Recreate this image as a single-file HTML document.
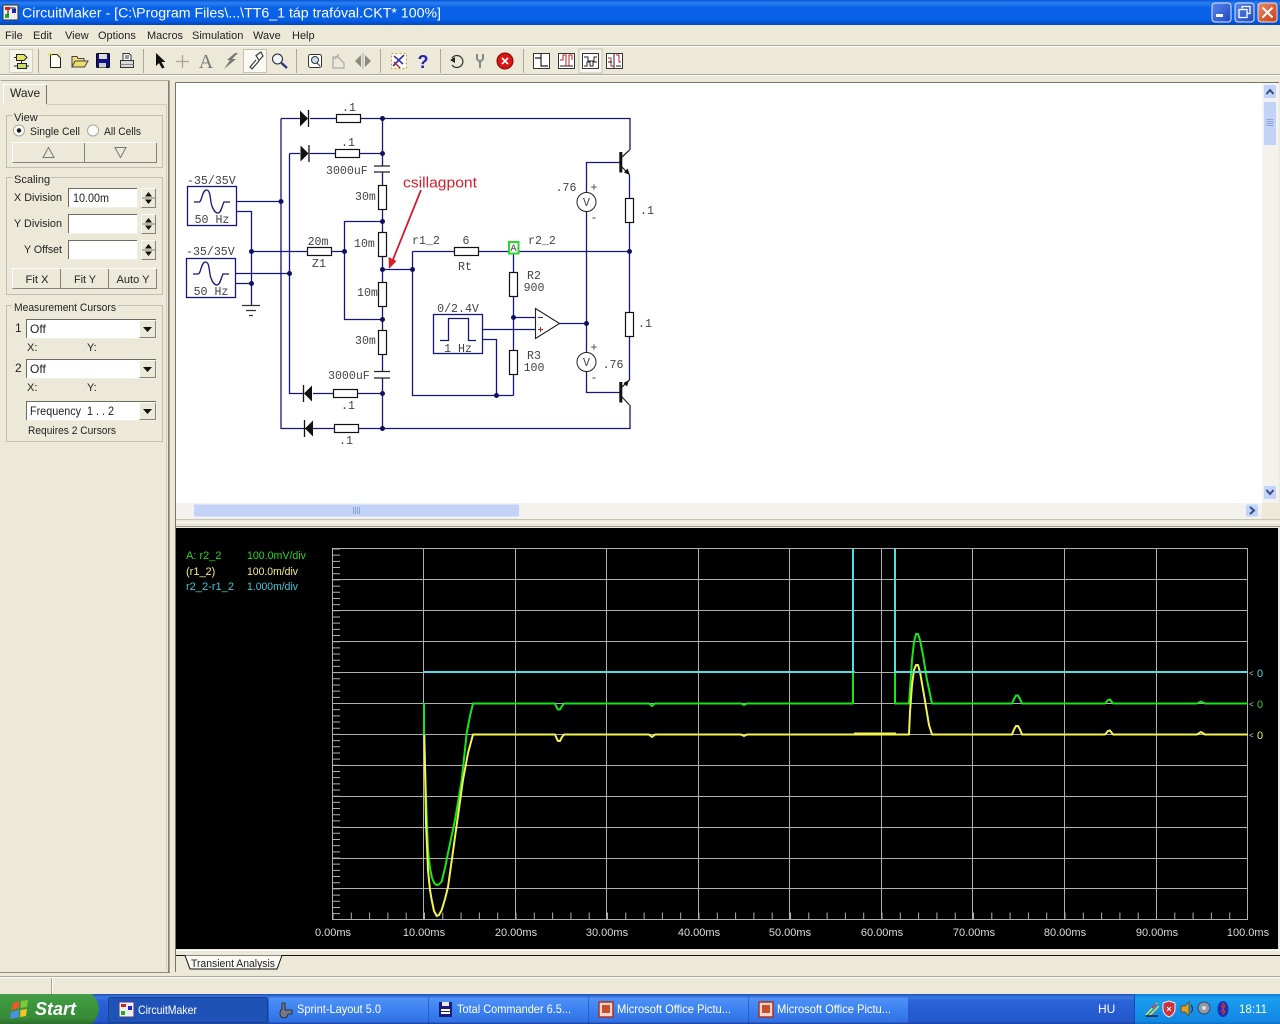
<!DOCTYPE html>
<html><head><meta charset="utf-8"><title>CircuitMaker</title>
<style>
html,body{margin:0;padding:0;background:#ece9d8;overflow:hidden}
svg{display:block}
text{font-family:"Liberation Sans",sans-serif;font-size:11px;fill:#222}
.m{font-family:"Liberation Mono",monospace;font-size:11.6px;fill:#444}
.mc{font-family:"Liberation Mono",monospace;font-size:11.6px;fill:#444;text-anchor:middle}
.c{text-anchor:middle}
.w{fill:none;stroke:#16167c;stroke-width:1.3}
.r{fill:#fff;stroke:#111;stroke-width:1.2}
.g{fill:none;stroke:#c2bfb0;stroke-width:1}
.b{fill:#ece9d8;stroke:none}
.hl{fill:none;stroke:#fff}
.sh{fill:none;stroke:#85837a}
.i{fill:#fff;stroke:#f2f0e6;stroke-width:1}
.d{fill:#101060}
.tb{fill:#fff;font-size:12px}
.ax{fill:#ddd;font-size:11px;text-anchor:middle}
.gr{stroke:#b0b0b0;stroke-width:1;fill:none}
.ic{fill:none;stroke:#333;stroke-width:1}
.sp{stroke:#aca899;stroke-width:1}
.tr{fill:none;stroke-width:2;stroke-linejoin:round}
</style></head><body>
<svg xmlns="http://www.w3.org/2000/svg" width="1280" height="1024" viewBox="0 0 1280 1024">
<defs>
<linearGradient id="tt" x1="0" y1="0" x2="0" y2="1"><stop offset="0" stop-color="#0a55dc"/><stop offset=".12" stop-color="#2a80f0"/><stop offset=".3" stop-color="#0a62e8"/><stop offset=".8" stop-color="#0660e6"/><stop offset="1" stop-color="#0344c0"/></linearGradient>
<linearGradient id="tk" x1="0" y1="0" x2="0" y2="1"><stop offset="0" stop-color="#1f4fb8"/><stop offset=".1" stop-color="#3a78e0"/><stop offset=".25" stop-color="#2a62d8"/><stop offset=".9" stop-color="#2358cc"/><stop offset="1" stop-color="#1a45a8"/></linearGradient>
<linearGradient id="st" x1="0" y1="0" x2="0" y2="1"><stop offset="0" stop-color="#4d9a4d"/><stop offset=".2" stop-color="#3f9a3f"/><stop offset=".8" stop-color="#378a37"/><stop offset="1" stop-color="#2a6e2a"/></linearGradient>
<linearGradient id="tr" x1="0" y1="0" x2="0" y2="1"><stop offset="0" stop-color="#0f7fd8"/><stop offset=".15" stop-color="#1a9ef0"/><stop offset=".9" stop-color="#1288e4"/><stop offset="1" stop-color="#0d6fc4"/></linearGradient>
<linearGradient id="tb1" x1="0" y1="0" x2="0" y2="1"><stop offset="0" stop-color="#4f92f6"/><stop offset=".5" stop-color="#3c81f0"/><stop offset="1" stop-color="#3170e0"/></linearGradient>
<linearGradient id="cl" x1="0" y1="0" x2="1" y2="1"><stop offset="0" stop-color="#e88a6a"/><stop offset="1" stop-color="#c63c14"/></linearGradient>
<linearGradient id="bl" x1="0" y1="0" x2="1" y2="1"><stop offset="0" stop-color="#5a86ee"/><stop offset="1" stop-color="#1e48c0"/></linearGradient>
</defs>

<rect width="1280" height="1024" fill="#ece9d8"/>

<!-- title bar -->
<rect width="1280" height="25" fill="url(#tt)"/>
<rect x="3" y="5" width="15" height="15" fill="#eee" stroke="#333"/>
<rect x="5" y="7" width="5" height="3" fill="#c22"/><rect x="12" y="9" width="4" height="4" fill="#22c"/><rect x="5" y="14" width="4" height="4" fill="#2a2"/><path d="M8 10V15M10 8H15V10" stroke="#111" fill="none"/>
<text x="22" y="17.5" style="font-size:13.500px;fill:#fff" textLength="419" lengthAdjust="spacingAndGlyphs">CircuitMaker - [C:\Program Files\...\TT6_1 táp trafóval.CKT* 100%]</text>
<rect x="1212" y="3" width="19" height="19" rx="3" fill="url(#bl)" stroke="#dfe8fa"/>
<rect x="1216" y="14" width="7" height="3" fill="#fff"/>
<rect x="1235" y="3" width="19" height="19" rx="3" fill="url(#bl)" stroke="#dfe8fa"/>
<path d="M1242 8.500V6.500H1250V13.500H1247M1239 9.500H1247V17.500H1239Z" fill="none" stroke="#fff" stroke-width="1.300"/>
<rect x="1258" y="3" width="19" height="19" rx="3" fill="url(#cl)" stroke="#f0e0d8"/>
<path d="M1262.500 7.500L1272.500 17.500M1272.500 7.500L1262.500 17.500" stroke="#fff" stroke-width="2"/>

<!-- menu -->
<g style="font-size:11px">
<text x="5" y="39">File</text><text x="33" y="39">Edit</text><text x="65" y="39">View</text><text x="98" y="39">Options</text><text x="147" y="39">Macros</text><text x="192" y="39">Simulation</text><text x="253" y="39">Wave</text><text x="292" y="39">Help</text>
</g>
<path d="M0 45.500H1280" stroke="#aca899"/><path d="M0 46.500H1280" stroke="#fff"/>
<path d="M0 74.500H1280" stroke="#aca899"/><path d="M0 75.500H1280" stroke="#fbfaf4"/>

<!-- toolbar -->
<path class="sp" d="M38.500 49V73M143.500 49V73M296.500 49V73M380.500 49V73M440.500 49V73M523.500 49V73"/>
<rect x="9.500" y="49.500" width="23" height="23" fill="#f4f3ea" stroke="#d2cfc0"/>
<path d="M16.500 54.500H24L27 57.500L24 60.500H16.500Z" fill="#e8e468" stroke="#222"/>
<rect x="17.500" y="63.500" width="9" height="5" fill="#c8d870" stroke="#222"/>
<path d="M14 57.500H16.500M14 66H17.500M26.500 66H29M21.500 60.500V63.500" stroke="#222"/>
<path d="M50.500 54.500H57L60.500 58V67.500H50.500Z" fill="#fffff4" stroke="#222"/>
<path d="M48 56L50 53L52 56M60 52V56" stroke="#e8e030" fill="none"/>
<path d="M72 67V56.500H77L78 58.500H84V61" fill="#f0e080" stroke="#444"/><path d="M72 67L75 61H88L84.500 67Z" fill="#ece070" stroke="#444"/>
<rect x="96.500" y="53.500" width="13" height="14" rx="1" fill="#10108c" stroke="#000"/><rect x="99" y="54" width="8" height="5" fill="#ddd"/><rect x="99" y="63" width="7" height="4.500" fill="#ccc"/>
<path d="M123 60V53.500H129L131 55.500V60" fill="#f8f8f8" stroke="#333"/><path d="M125 56H129M125 58H129" stroke="#333"/><path d="M120.500 60.500H133.500V67.500H120.500Z" fill="#d8d8d8" stroke="#333"/><path d="M120.500 64.500H133.500" stroke="#888"/>
<path d="M156 53L156 66L159 63L162 68.500L164.500 67.500L161.500 62L165.500 62Z" fill="#111"/>
<path d="M182.500 55V68M176 61.500H189" stroke="#a8a698" stroke-width="1.300"/>
<text x="206" y="68" class="c" style="font-family:'Liberation Serif',serif;font-size:20px;fill:#777">A</text>
<path d="M235 53L227 60H230L224 69L236 59H232L238 53Z" fill="#777"/>
<rect x="243.500" y="49.500" width="23" height="23" fill="#fafaf4" stroke="#c5c2b2"/>
<path d="M256 55.500L261 52L263 56L259 60.500ZM256 60L250 67L252 69L259 61" fill="none" stroke="#333" stroke-width="1.100"/>
<circle cx="277.500" cy="59" r="5" fill="#f0f6fc" stroke="#223"/><path d="M281.500 63L287 68" stroke="#2a2a80" stroke-width="2.200"/>
<rect x="308.500" y="54.500" width="13" height="13" rx="2" fill="#fff" stroke="#333"/><circle cx="315" cy="60" r="3.500" fill="#cde" stroke="#333"/><path d="M317 63L320 66" stroke="#333"/>
<path d="M333 68V57H338L344 63V68ZM335 59L339 54" fill="none" stroke="#aaa" stroke-width="1.300"/>
<path d="M361 55L355 61L361 67ZM365 55L371 61L365 67Z" fill="#8a8a80"/><path d="M363 53V69" stroke="#aaa"/>
<rect x="391.500" y="53.500" width="15" height="15" fill="#fff" stroke="#c8a020" stroke-dasharray="2 2"/><path d="M393 66L404 55M394 56L403 64" stroke="#3333aa" stroke-width="1.600"/><path d="M394 62L400 68" stroke="#c02020" stroke-width="1.400"/>
<text x="423" y="68" class="c" style="font-size:18px;font-weight:bold;fill:#2020c0">?</text>
<path d="M452 58A6 6 0 1 1 452 65" fill="none" stroke="#333" stroke-width="1.200"/><path d="M450 60L455 57L455 63Z" fill="#222"/>
<path d="M477 54V59L480 62V68M483 54V59L480 62" fill="none" stroke="#888" stroke-width="2"/>
<circle cx="505" cy="61" r="8" fill="#d81818" stroke="#800"/><path d="M502 58L508 64M508 58L502 64" stroke="#fff" stroke-width="1.600"/>
<rect x="533.500" y="53.500" width="16" height="15" fill="#fff" stroke="#333"/><path d="M535 58H541V54M541 58V66H548" fill="none" stroke="#222" stroke-width="1.200"/>
<rect x="558.500" y="53.500" width="16" height="15" fill="#fff" stroke="#333"/><path d="M560 60H563V55H566V66H569V55H572V60" fill="none" stroke="#c02020"/><path d="M560 66H573" stroke="#222"/>
<rect x="579" y="49" width="23" height="24" fill="#f7f6f0" stroke="#c5c2b2"/><rect x="582.500" y="53.500" width="16" height="15" fill="#fff" stroke="#333"/><path d="M584 57H588V61H594V57H597M584 66H587V62H590V66H593V62H597" fill="none" stroke="#222"/>
<rect x="606.500" y="53.500" width="16" height="15" fill="#fff" stroke="#333"/><path d="M608 58H611V66H614M616 55H619V62H621" fill="none" stroke="#c02020"/><path d="M614 54V68" stroke="#223"/><path d="M608 62H612M616 66H621" stroke="#222"/>

<!-- left panel -->
<path d="M0.500 80.500H169.500M169.500 80.500V972" fill="none" stroke="#aca899"/>
<path d="M0 972.500H170" stroke="#8d8a7c"/>
<path d="M168.500 81V972" stroke="#808070"/>
<path d="M47 104.500H166M166.500 104V970" fill="none" stroke="#cfccbc"/>
<path d="M3.500 104.500V84.500H46.500" fill="none" stroke="#fff"/><path d="M46.500 85V104" stroke="#77756a"/>
<text x="10" y="97" style="font-size:12px">Wave</text>

<rect class="g" x="6.500" y="115.500" width="156" height="52"/>
<rect x="12" y="112" width="27" height="10" fill="#ece9d8"/><text x="14" y="121">View</text>
<circle cx="19" cy="130.500" r="5.500" fill="#fff" stroke="#a8a698"/><circle cx="19" cy="130.500" r="2.200" fill="#111"/>
<text x="30" y="135" textLength="50" lengthAdjust="spacingAndGlyphs">Single Cell</text>
<circle cx="93" cy="130.500" r="5.500" fill="#fff" stroke="#a8a698"/>
<text x="104" y="135" textLength="37" lengthAdjust="spacingAndGlyphs">All Cells</text>
<path class="hl" d="M12.500 162V142.500H84M84.500 162V142.500H156"/><path class="sh" d="M12.500 162.500H84.500V143M84.500 162.500H156.500V143"/>
<path d="M48.500 147.500L54 157.500H43Z" fill="none" stroke="#777"/><path d="M115 147.500H126L120.500 157.500Z" fill="none" stroke="#777"/>

<rect class="g" x="6.500" y="177.500" width="156" height="117"/>
<rect x="12" y="174" width="39" height="10" fill="#ece9d8"/><text x="14" y="183">Scaling</text>
<text x="14" y="201" textLength="48" lengthAdjust="spacingAndGlyphs">X Division</text>
<rect class="i" x="68.500" y="188.500" width="69" height="19"/><path d="M68.500 207V188.500H137" fill="none" stroke="#6e6c60"/><text x="73" y="202" style="font-size:12px" textLength="36" lengthAdjust="spacingAndGlyphs">10.00m</text>
<text x="14" y="227" textLength="48" lengthAdjust="spacingAndGlyphs">Y Division</text>
<rect class="i" x="68.500" y="214.500" width="69" height="19"/><path d="M68.500 233V214.500H137" fill="none" stroke="#6e6c60"/>
<text x="24" y="253" textLength="38" lengthAdjust="spacingAndGlyphs">Y Offset</text>
<rect class="i" x="68.500" y="240.500" width="69" height="19"/><path d="M68.500 259V240.500H137" fill="none" stroke="#6e6c60"/>
<path class="hl" d="M141.500 207V188.500H155M141.500 233V214.500H155M141.500 259V240.500H155"/>
<path class="sh" d="M141.500 207.500H155.500V189M141.500 233.500H155.500V215M141.500 259.500H155.500V241M142 198H155M142 224H155M142 250H155"/>
<path d="M145 196.500L148.500 192L152 196.500ZM145 199.500H152L148.500 204ZM145 222.500L148.500 218L152 222.500ZM145 225.500H152L148.500 230ZM145 248.500L148.500 244L152 248.500ZM145 251.500H152L148.500 256Z" fill="#111"/>
<path class="hl" d="M12.500 288V268.500H60M60.500 288V268.500H108M108.500 288V268.500H156"/><path class="sh" d="M12.500 288.500H156.500V269M60.500 288.500V269M108.500 288.500V269"/>
<text x="37" y="283" class="c" textLength="23" lengthAdjust="spacingAndGlyphs">Fit X</text><text x="85" y="283" class="c" textLength="22" lengthAdjust="spacingAndGlyphs">Fit Y</text><text x="133" y="283" class="c" textLength="33" lengthAdjust="spacingAndGlyphs">Auto Y</text>

<rect class="g" x="6.500" y="305.500" width="156" height="136"/>
<rect x="12" y="302" width="106" height="10" fill="#ece9d8"/><text x="14" y="311" textLength="102" lengthAdjust="spacingAndGlyphs">Measurement Cursors</text>
<text x="15" y="332" style="font-size:12px">1</text>
<rect class="i" x="26.500" y="319.500" width="130" height="19"/><path d="M26.500 338V319.500H156" fill="none" stroke="#6e6c60"/><text x="30" y="333" style="font-size:12px">Off</text>
<rect class="b" x="139" y="320" width="17" height="18"/><path class="hl" d="M139.500 337V320.500H155"/><path class="sh" d="M139.500 337.500H155.500V321"/><path d="M143 327H152L147.500 332Z" fill="#111"/>
<text x="27" y="351">X:</text><text x="87" y="351">Y:</text>
<text x="15" y="372" style="font-size:12px">2</text>
<rect class="i" x="26.500" y="359.500" width="130" height="19"/><path d="M26.500 378V359.500H156" fill="none" stroke="#6e6c60"/><text x="30" y="373" style="font-size:12px">Off</text>
<rect class="b" x="139" y="360" width="17" height="18"/><path class="hl" d="M139.500 377V360.500H155"/><path class="sh" d="M139.500 377.500H155.500V361"/><path d="M143 367H152L147.500 372Z" fill="#111"/>
<text x="27" y="391">X:</text><text x="87" y="391">Y:</text>
<rect class="i" x="26.500" y="401.500" width="130" height="19"/><path d="M26.500 420V401.500H156" fill="none" stroke="#6e6c60"/><text x="30" y="415" style="font-size:12px;white-space:pre" textLength="84" lengthAdjust="spacingAndGlyphs">Frequency  1 . . 2</text>
<rect class="b" x="139" y="402" width="17" height="18"/><path class="hl" d="M139.500 419V402.500H155"/><path class="sh" d="M139.500 419.500H155.500V403"/><path d="M143 409H152L147.500 414Z" fill="#111"/>
<text x="28" y="434" textLength="88" lengthAdjust="spacingAndGlyphs">Requires 2 Cursors</text>

<!-- circuit area -->
<rect x="176" y="83" width="1086" height="420" fill="#fff"/>
<path d="M175.500 82.500H1279M175.500 82.500V972" fill="none" stroke="#77756a"/>
<!-- wires -->
<path class="w" d="M281 118.500H300M310 118.500H337M361 118.500H630V150M281 118.500V428.500H630V405M289.500 153.500H300M310 153.500H335M360 153.500H382M289.500 153.500V393.500H303M313 393.500H333M358 393.500H382M313 428.500H334M359 428.500H382"/>
<path class="w" d="M382.500 118.500V165.500M382.500 172.500V185M382.500 209V232M382.500 257V282M382.500 306V330M382.500 355V371M382.500 378V428.500"/>
<path class="w" d="M382.500 221.500H344.500V319.500H382.500M251.500 251.500H307M332 251.500H344.500"/>
<path class="w" d="M237 201.500H281M237 211.500H251.500V305M236 273.500H289.500M236 283.500H251.500"/>
<path class="w" d="M382.500 269.500H412.500M412.500 251.500V395.500H513.500M412.500 251.500H454M479 251.500H629.500M513.500 252V272M513.500 297V350M513.500 375V395.500"/>
<path class="w" d="M513.500 317.500H535M483 329.500H535M559 323.500H586.500M483 339.500H496.500V395.500"/>
<path class="w" d="M606 162.500H586.500V192.500M586.500 211.500V352.500M586.500 371.500V392.500H606"/>
<path class="w" d="M629.500 175V198M629.500 222V312M629.500 337V380"/>
<path d="M606 162.500H620M606 392.500H620" stroke="#16167c" stroke-width="1.300"/>
<!-- ground -->
<path d="M242 305.500H260M246 310.500H256M249 315.500H253" stroke="#333" stroke-width="1.200"/>
<!-- junctions -->
<g class="d">
<circle cx="382.500" cy="118.500" r="2.500"/><circle cx="382.500" cy="153.500" r="2.500"/><circle cx="382.500" cy="221.500" r="2.500"/><circle cx="382.500" cy="269.500" r="2.500"/><circle cx="382.500" cy="319.500" r="2.500"/><circle cx="382.500" cy="393.500" r="2.500"/><circle cx="382.500" cy="428.500" r="2.500"/>
<circle cx="281" cy="201.500" r="2.500"/><circle cx="289.500" cy="273.500" r="2.500"/><circle cx="251.500" cy="251.500" r="2.500"/><circle cx="251.500" cy="283.500" r="2.500"/><circle cx="344.500" cy="251.500" r="2.500"/>
<circle cx="412.500" cy="269.500" r="2.500"/><circle cx="496.500" cy="395.500" r="2.500"/><circle cx="513.500" cy="317.500" r="2.500"/><circle cx="586.500" cy="323.500" r="2.500"/><circle cx="629.500" cy="251.500" r="2.500"/>
</g>
<!-- diodes -->
<path d="M300 110.500V126.500L308 118.500ZM300.500 145.500V161.500L308.500 153.500ZM312 385.500V401.500L304 393.500ZM313 420.500V436.500L305 428.500Z" fill="#111"/>
<path d="M308.500 110V127M309 145V162M303.500 385V402M304.500 420V437" stroke="#111" stroke-width="1.300"/>
<!-- resistors -->
<rect class="r" x="336.500" y="114.500" width="24" height="8"/><rect class="r" x="335.500" y="149.500" width="24" height="8"/>
<rect class="r" x="333.500" y="389.500" width="24" height="8"/><rect class="r" x="334.500" y="424.500" width="24" height="8"/>
<rect class="r" x="378.500" y="185.500" width="8" height="24"/><rect class="r" x="378.500" y="232.500" width="8" height="24"/>
<rect class="r" x="378.500" y="282.500" width="8" height="24"/><rect class="r" x="378.500" y="330.500" width="8" height="24"/>
<rect class="r" x="307.500" y="247.500" width="24" height="8"/><rect class="r" x="454.500" y="247.500" width="24" height="8"/>
<rect class="r" x="509.500" y="272.500" width="8" height="24"/><rect class="r" x="509.500" y="350.500" width="8" height="24"/>
<rect class="r" x="625.500" y="198.500" width="8" height="24"/><rect class="r" x="625.500" y="312.500" width="8" height="24"/>
<!-- caps -->
<path d="M374 166H390M374 172H390M374 371.500H390M374 378H390" stroke="#222" stroke-width="1.300"/>
<!-- sources -->
<rect x="187.500" y="186.500" width="49" height="39" fill="#fff" stroke="#16167c" stroke-width="1.300"/>
<rect x="186.500" y="258.500" width="49" height="39" fill="#fff" stroke="#16167c" stroke-width="1.300"/>
<path class="w" d="M194 202H199C202 202 202 190 206.500 190C211 190 210 202 212 206C214 212 216 213 218 213C221 213 222 206 224 202H230"/>
<path class="w" d="M193 274H198C201 274 201 262 205.500 262C210 262 209 274 211 278C213 284 215 285 217 285C220 285 221 278 223 274H229"/>
<rect x="433.500" y="314.500" width="49" height="39" fill="#fff" stroke="#16167c" stroke-width="1.300"/>
<path class="w" d="M440 340.500H448.500V318.500H468.500V340.500H476"/>
<!-- opamp -->
<path d="M535.500 308.500V338.500L559.500 323.500Z" fill="#fff" stroke="#222" stroke-width="1.100"/>
<path d="M538 317.500H543" stroke="#333"/><path d="M538 329.500H543M540.500 327V332" stroke="#c02020"/>
<!-- voltmeters -->
<circle cx="586.500" cy="202" r="9.500" fill="#fff" stroke="#222"/><circle cx="586.500" cy="362" r="9.500" fill="#fff" stroke="#222"/>
<text x="586.500" y="206" class="mc">V</text><text x="586.500" y="366" class="mc">V</text>
<!-- transistors -->
<path d="M620.800 152V172.500M620.800 382V402.500" stroke="#111" stroke-width="3"/>
<path d="M622 157L629.500 150M622 167L629.500 175M622 387L629.500 380M622 397L629.500 405" stroke="#222" stroke-width="1.200"/>
<path d="M630 175L624 172.500L627.500 168.500ZM623.500 383L629 380L627 386.500Z" fill="#111"/>
<!-- probe -->
<rect x="509" y="242" width="9.500" height="11.500" fill="#fff" stroke="#22dd22" stroke-width="2"/>
<text x="513.500" y="251" class="mc" style="font-size:10px">A</text>
<!-- labels -->
<text x="349" y="111" class="mc">.1</text><text x="348" y="146" class="mc">.1</text>
<text x="326" y="174" class="m">3000uF</text><text x="355" y="200" class="m">30m</text><text x="354" y="247" class="m">10m</text><text x="357" y="296" class="m">10m</text><text x="355" y="344" class="m">30m</text><text x="328" y="379" class="m">3000uF</text>
<text x="348" y="409" class="mc">.1</text><text x="346" y="444" class="mc">.1</text>
<text x="187" y="184" class="m">-35/35V</text><text x="186" y="255" class="m">-35/35V</text>
<text x="212" y="223" class="mc">50 Hz</text><text x="211" y="295" class="mc">50 Hz</text>
<text x="318" y="245" class="mc">20m</text><text x="319" y="267" class="mc">Z1</text>
<text x="412" y="244" class="m">r1_2</text><text x="466" y="244" class="mc">6</text><text x="465" y="270" class="mc">Rt</text><text x="528" y="244" class="m">r2_2</text>
<text x="534" y="279" class="mc">R2</text><text x="534" y="291" class="mc">900</text><text x="534" y="359" class="mc">R3</text><text x="534" y="371" class="mc">100</text>
<text x="458" y="312" class="mc">0/2.4V</text><text x="458" y="352" class="mc">1 Hz</text>
<text x="566" y="191" class="mc">.76</text><text x="613" y="368" class="mc">.76</text>
<text x="594" y="191" class="mc">+</text><text x="594" y="221" class="mc">-</text><text x="594" y="351" class="mc">+</text><text x="594" y="381" class="mc">-</text>
<text x="647" y="214" class="mc">.1</text><text x="645" y="327" class="mc">.1</text>
<!-- annotation -->
<text x="403" y="187.500" style="font-size:14.500px;fill:#d02030" textLength="74" lengthAdjust="spacingAndGlyphs">csillagpont</text>
<path d="M421 190L392 262" stroke="#d02030" stroke-width="1.800"/>
<path d="M389 269L388.500 257L396.500 261Z" fill="#d82020"/>

<!-- vertical scrollbar -->
<rect x="1262" y="83" width="17" height="420" fill="#f3f2ec"/>
<rect x="1263.500" y="84.500" width="13" height="14" rx="1.500" fill="#c3d3f8" stroke="#eef2fc"/>
<path d="M1266.500 94L1270 90L1273.500 94" fill="none" stroke="#3a4d80" stroke-width="2"/>
<rect x="1263.500" y="101.500" width="13" height="44" rx="1.500" fill="#c3d3f8" stroke="#eef2fc"/>
<path d="M1266.500 119.500H1273.500M1266.500 121.500H1273.500M1266.500 123.500H1273.500M1266.500 125.500H1273.500" stroke="#8ea4d8"/>
<rect x="1263.500" y="485.500" width="13" height="14" rx="1.500" fill="#c3d3f8" stroke="#eef2fc"/>
<path d="M1266.500 490L1270 494L1273.500 490" fill="none" stroke="#3a4d80" stroke-width="2"/>
<!-- horizontal scrollbar -->
<rect x="176" y="503" width="1086" height="16" fill="#f3f2ec"/>
<rect x="193.500" y="504" width="326" height="13" rx="1.500" fill="#c3d3f8" stroke="#eef2fc"/>
<path d="M353.500 507V514M355.500 507V514M357.500 507V514M359.500 507V514" stroke="#8ea4d8"/>
<rect x="1245.500" y="504" width="13" height="13" rx="1.500" fill="#c3d3f8" stroke="#eef2fc"/>
<path d="M1250 507L1254 510.500L1250 514" fill="none" stroke="#3a4d80" stroke-width="2"/>
<path d="M176 519.500H1280" stroke="#c8c5b5"/><path d="M176 522.500H1280" stroke="#fbfaf4"/><path d="M176 526.500H1280" stroke="#9c9a8c"/>

<!-- plot -->
<rect x="176" y="528" width="1102" height="421" fill="#000"/>
<g class="gr">
<path d="M332.500 548.500H1247.500M332.500 579.500H1247.500M332.500 610.500H1247.500M332.500 641.500H1247.500M332.500 672.500H1247.500M332.500 703.500H1247.500M332.500 734.500H1247.500M332.500 765.500H1247.500M332.500 796.500H1247.500M332.500 827.500H1247.500M332.500 858.500H1247.500M332.500 888.500H1247.500M332.500 919.500H1247.500"/>
<path d="M332.500 548V920M423.500 548V920M515.500 548V920M606.500 548V920M698.500 548V920M789.500 548V920M881.500 548V920M972.500 548V920M1064.500 548V920M1156.500 548V920M1247.500 548V920"/>
<path d="M336.500 548.500V920" stroke-width="7" stroke-dasharray="1 5.180"/>
<path d="M332.500 916H1248" stroke-width="7" stroke-dasharray="1 17.300"/>
</g>
<!-- traces -->
<polyline class="tr" stroke="#19e619" points="424,703 424,733 426,797 428,850 430,868 432,878 434.500,883.500 436.700,885 439,884.500 441.700,881.500 445,868 448,853 455,820 461.700,780 466.700,733 470,716 473,703.500 555,703.500 556.500,707 558,709.500 560,709.500 562,706 564,703.500 649,703.500 652,706 655,703.500 741,703.500 744,705 747,703.500 853,703.500 853,672 855,672"/>
<polyline class="tr" stroke="#19e619" points="895,672 895,703.500 909,703.500 910,690 912,660 914,642 916,634 918,634 920,640 923,655 927,680 932,703.500 1012,703.500 1014,699 1016,695.500 1018,695.500 1020,699 1022,703.500 1105,703.500 1108,700 1110,699.500 1113,703.500 1197,703.500 1201,701.500 1205,703.500 1248,703.500"/>
<polyline class="tr" stroke="#f4f44e" points="424.300,735 425,767 426,823 428,870 430,890 431.700,900 434,911 436.700,916 439,915 441.700,910 445,899 448,887 455,837 463,780 468,753 473,734.500 555,734.500 556.500,738 558,741 560,741 562,737 564,734.500 649,734.500 652,737 655,734.500 741,734.500 744,736 747,734.500 909,734.500 910,712 912,685 914,670 916,665 918,665 920,672 924,695 929,725 932,734.500 1012,734.500 1014,729.500 1016,726 1018,726 1020,729.500 1022,734.500 1105,734.500 1108,731 1110,730.500 1113,734.500 1197,734.500 1201,732 1205,734.500 1248,734.500"/>
<path d="M854 733.500H896" stroke="#f4f44e" stroke-width="2" fill="none"/>
<polyline class="tr" stroke="#4fdde6" points="424,672 853,672 853,548"/>
<polyline class="tr" stroke="#4fdde6" points="895,548 895,672 1248,672"/>
<!-- legend -->
<text x="186" y="559" style="fill:#22d822">A: r2_2</text><text x="247" y="559" style="fill:#22d822" textLength="59" lengthAdjust="spacingAndGlyphs">100.0mV/div</text>
<text x="186" y="575" style="fill:#f4f07a">(r1_2)</text><text x="247" y="575" style="fill:#f4f07a" textLength="51" lengthAdjust="spacingAndGlyphs">100.0m/div</text>
<text x="186" y="590" style="fill:#40c8d8" textLength="48" lengthAdjust="spacingAndGlyphs">r2_2-r1_2</text><text x="247" y="590" style="fill:#40c8d8" textLength="51" lengthAdjust="spacingAndGlyphs">1.000m/div</text>
<!-- zero markers -->
<text x="1249" y="676" style="fill:#ccc;font-size:8px">&lt;</text><text x="1257" y="677" style="fill:#60d0e0">0</text>
<text x="1249" y="707" style="fill:#ccc;font-size:8px">&lt;</text><text x="1257" y="708" style="fill:#30d030">0</text>
<text x="1249" y="738" style="fill:#ccc;font-size:8px">&lt;</text><text x="1257" y="739" style="fill:#f0f060">0</text>
<!-- axis labels -->
<text x="333" y="936" class="ax">0.00ms</text><text x="424" y="936" class="ax">10.00ms</text><text x="516" y="936" class="ax">20.00ms</text><text x="607" y="936" class="ax">30.00ms</text><text x="699" y="936" class="ax">40.00ms</text><text x="790" y="936" class="ax">50.00ms</text><text x="882" y="936" class="ax">60.00ms</text><text x="974" y="936" class="ax">70.00ms</text><text x="1065" y="936" class="ax">80.00ms</text><text x="1157" y="936" class="ax">90.00ms</text><text x="1248" y="936" class="ax">100.0ms</text>

<!-- tab strip -->
<rect x="176" y="949" width="1104" height="23" fill="#ece9d8"/>
<path d="M176 950.500H1280" stroke="#fbfaf4"/>
<path d="M176 955.500H1280" stroke="#111"/>
<path d="M185 955.500L190 969H277L282 955.500" fill="#fbfaf4" stroke="#111"/>
<text x="191" y="967" textLength="84" lengthAdjust="spacingAndGlyphs">Transient Analysis</text>
<!-- status bar -->
<path d="M0 976.500H1280" stroke="#aca899"/><path d="M0 977.500H1280" stroke="#fbfaf4"/>
<path d="M51.500 978V994" stroke="#aca899"/><path d="M52.500 978V994" stroke="#fbfaf4"/>

<!-- taskbar -->
<rect y="994" width="1280" height="30" fill="url(#tk)"/>
<path d="M0 994 H92 Q98 1000 99 1009 Q98 1018 92 1024 H0Z" fill="url(#st)"/>
<path d="M13 1003L19 1001V1008L11 1010Z" fill="#e85a2a"/><path d="M21 1001L28 1000L27 1007L20.500 1008Z" fill="#7ec83c"/><path d="M11 1012L19 1010V1017L10 1019Z" fill="#4a90e0"/><path d="M20.500 1010L27 1009L26 1016L20 1017Z" fill="#f0c820"/>
<text x="35" y="1015" style="font-size:18px;font-weight:bold;font-style:italic;fill:#fff">Start</text>

<rect x="108.500" y="997.500" width="159" height="25" rx="2" fill="#1e52b7" stroke="#17418f"/>
<rect x="119" y="1002" width="15" height="15" fill="#eee" stroke="#4a3a90"/><rect x="121" y="1004" width="5" height="3" fill="#c22"/><rect x="128" y="1006" width="4" height="4" fill="#22c"/><rect x="121" y="1011" width="4" height="4" fill="#2a2"/>
<text x="138" y="1014" class="tb" textLength="59" lengthAdjust="spacingAndGlyphs">CircuitMaker</text>

<rect x="269" y="997.500" width="159" height="25" rx="2" fill="url(#tb1)"/>
<path d="M282 1003H285V1010H292V1014H288A3 3 0 0 1 280 1014Q280 1010 282 1009Z" fill="#778" stroke="#222" stroke-width=".8"/>
<text x="297" y="1013" class="tb" textLength="84" lengthAdjust="spacingAndGlyphs">Sprint-Layout 5.0</text>

<rect x="429" y="997.500" width="159" height="25" rx="2" fill="url(#tb1)"/>
<rect x="439" y="1002" width="13" height="15" fill="#1a1a80"/><rect x="441" y="1009" width="9" height="2" fill="#fff"/><rect x="441" y="1012" width="9" height="2" fill="#fff"/><rect x="442" y="1002" width="7" height="4" fill="#e8e8e8"/>
<text x="457" y="1013" class="tb" textLength="114" lengthAdjust="spacingAndGlyphs">Total Commander 6.5...</text>

<rect x="589" y="997.500" width="159" height="25" rx="2" fill="url(#tb1)"/>
<rect x="599" y="1002" width="14" height="15" fill="#f0d8c8" stroke="#b03020" stroke-width="1.500"/><rect x="602" y="1005" width="8" height="8" fill="#c85030"/>
<text x="617" y="1013" class="tb" textLength="114" lengthAdjust="spacingAndGlyphs">Microsoft Office Pictu...</text>

<rect x="749" y="997.500" width="159" height="25" rx="2" fill="url(#tb1)"/>
<rect x="759" y="1002" width="14" height="15" fill="#f0d8c8" stroke="#b03020" stroke-width="1.500"/><rect x="762" y="1005" width="8" height="8" fill="#c85030"/>
<text x="777" y="1013" class="tb" textLength="114" lengthAdjust="spacingAndGlyphs">Microsoft Office Pictu...</text>

<text x="1098" y="1013" class="tb">HU</text>
<rect x="1134" y="994" width="146" height="30" fill="url(#tr)"/>
<path d="M1134.500 994V1024" stroke="#0b4fa0"/>
<path d="M1146 1015L1157 1003M1149 1016L1159 1006" stroke="#e0e040" stroke-width="1.500"/><path d="M1146 1016H1158" stroke="#123" stroke-width="1.500"/><path d="M1152 1008L1156 1004" stroke="#d03030" stroke-width="1.500"/>
<path d="M1163 1003L1169 1001L1175 1003V1010Q1174 1015 1169 1017Q1164 1015 1163 1010Z" fill="#d03040" stroke="#eee"/><path d="M1167 1007L1171 1011M1171 1007L1167 1011" stroke="#fff"/>
<path d="M1181 1006H1185L1189 1002V1016L1185 1012H1181Z" fill="#e8a020" stroke="#553"/><path d="M1191 1005Q1194 1009 1191 1013" fill="none" stroke="#234" stroke-width="1.200"/>
<circle cx="1204" cy="1008" r="6" fill="#8a9ab0" stroke="#445"/><circle cx="1204" cy="1008" r="2" fill="#ddd"/>
<ellipse cx="1223" cy="1009" rx="5.500" ry="8" fill="#1a30b0"/><path d="M1221 1005L1225 1012L1223 1014V1003L1225 1006L1221 1012" fill="none" stroke="#e03030"/>
<text x="1239" y="1013" class="tb" textLength="28" lengthAdjust="spacingAndGlyphs">18:11</text>
</svg>
</body></html>
